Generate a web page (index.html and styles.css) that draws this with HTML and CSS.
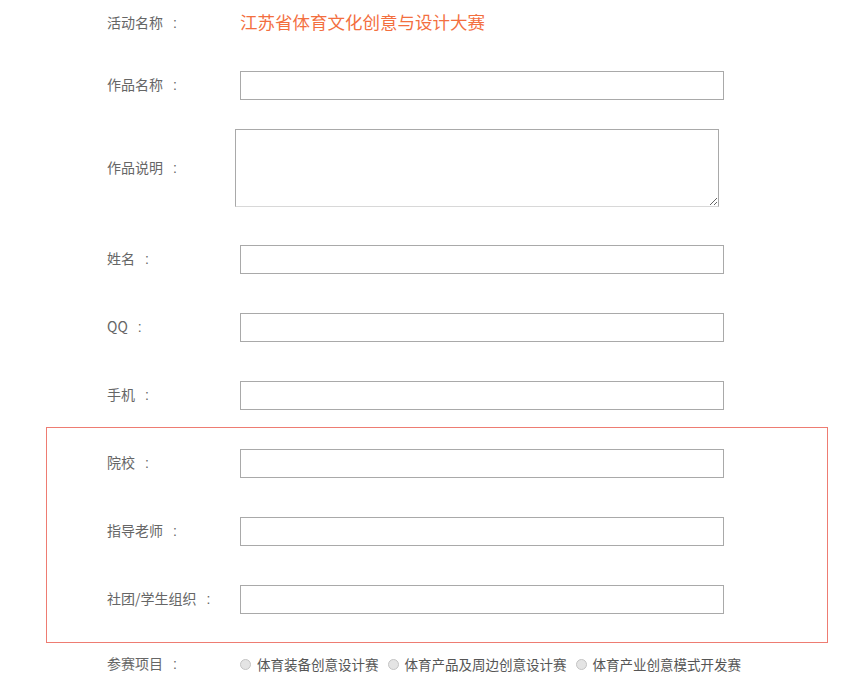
FILE: index.html
```html
<!DOCTYPE html>
<html lang="zh">
<head>
<meta charset="utf-8">
<link rel="stylesheet" href="styles.css">
</head>
<body>
<form class="form">
  <div class="row row-title">
    <span class="label">活动名称<i class="colon">:</i></span>
    <span class="title">江苏省体育文化创意与设计大赛</span>
  </div>
  <div class="row row-first">
    <span class="label">作品名称<i class="colon">:</i></span>
    <input class="field" type="text">
  </div>
  <div class="row row-area">
    <span class="label">作品说明<i class="colon">:</i></span>
    <textarea class="area"></textarea>
  </div>
  <div class="row row-after-area">
    <span class="label">姓名<i class="colon">:</i></span>
    <input class="field" type="text">
  </div>
  <div class="row">
    <span class="label">QQ<i class="colon">:</i></span>
    <input class="field" type="text">
  </div>
  <div class="row">
    <span class="label">手机<i class="colon">:</i></span>
    <input class="field" type="text">
  </div>
  <div class="group">
    <div class="row row-group-first">
      <span class="label">院校<i class="colon">:</i></span>
      <input class="field" type="text">
    </div>
    <div class="row">
      <span class="label">指导老师<i class="colon">:</i></span>
      <input class="field" type="text">
    </div>
    <div class="row">
      <span class="label">社团/学生组织<i class="colon">:</i></span>
      <input class="field" type="text">
    </div>
  </div>
  <div class="row row-radio">
    <span class="label">参赛项目<i class="colon">:</i></span>
    <div class="options">
      <label class="opt"><span class="dot"></span>体育装备创意设计赛</label>
      <label class="opt"><span class="dot"></span>体育产品及周边创意设计赛</label>
      <label class="opt"><span class="dot"></span>体育产业创意模式开发赛</label>
    </div>
  </div>
</form>
</body>
</html>
```

FILE: styles.css
```css
* { box-sizing: border-box; }
html, body {
  margin: 0;
  padding: 0;
  background: #fff;
  font-family: "Microsoft YaHei", "Noto Sans CJK SC", "Noto Sans", sans-serif;
}
.form {
  width: 860px;
  padding-top: 7px;
}
.row {
  display: flex;
  align-items: center;
  height: 29px;
  margin-top: 39px;
  padding-left: 107px;
}
.label {
  width: 133px;
  flex: none;
  font-size: 14px;
  color: #666;
  white-space: nowrap;
  padding-bottom: 3px;
}
.colon {
  font-style: normal;
  margin-left: 10px;
  font-family: "Liberation Sans", sans-serif;
}
.title {
  font-size: 17.5px;
  color: #f36f3f;
  white-space: nowrap;
}
.row-title { margin-top: 0; }
.row-title .label { padding-bottom: 0; }
.row-first { margin-top: 35px; }
.row-area { margin-top: 29px; height: 78px; }
.row-after-area { margin-top: 38px; }
.field {
  width: 484px;
  height: 29px;
  margin: 0;
  border: 1px solid #a9a9a9;
  background: #fff;
  padding: 0 6px;
  font: inherit;
  outline: none;
}
.area {
  width: 484px;
  height: 78px;
  margin: 0 0 0 -5px;
  border: 1px solid #a9a9a9;
  border-bottom-color: #d8d8d8;
  background: #fff;
  padding: 2px;
  font: inherit;
  resize: both;
  outline: none;
}
.group {
  margin: 17px 0 0 46px;
  width: 782px;
  border: 1px solid #ee7c72;
  padding: 21px 0 28px;
}
.group .row { padding-left: 60px; }
.group .row-group-first { margin-top: 0; }
.row-radio {
  margin-top: 10px;
  height: 22px;
}
.options {
  display: flex;
  align-items: center;
  gap: 9px;
}
.opt {
  display: flex;
  align-items: center;
  font-size: 13.5px;
  color: #555;
  white-space: nowrap;
}
.dot {
  width: 11px;
  height: 11px;
  border-radius: 50%;
  border: 1px solid #c4c4c4;
  background: #e4e4e4;
  margin-right: 6px;
  flex: none;
}
```
